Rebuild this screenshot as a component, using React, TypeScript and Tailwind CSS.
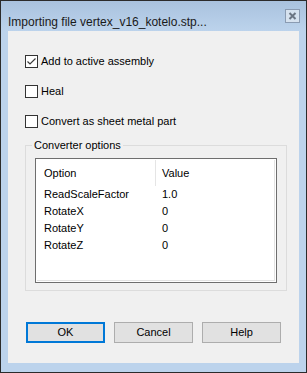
import { useState } from 'react';

const options: { name: string; value: string }[] = [
    { name: 'ReadScaleFactor', value: '1.0' },
    { name: 'RotateX', value: '0' },
    { name: 'RotateY', value: '0' },
    { name: 'RotateZ', value: '0' },
];

function CheckBox({ label, checked, onToggle }: { label: string; checked: boolean; onToggle: () => void }) {
    return (
        <label className="flex h-[13px] items-center gap-[3px]" onClick={onToggle}>
            <span className="flex h-[13px] w-[13px] items-center justify-center border border-[#333333] bg-white">
                {checked && (
                    <svg width="11" height="11" viewBox="0 0 11 11">
                        <path d="M1.5 5.5 L4 8 L9.5 2.5" fill="none" stroke="#3c3c3c" strokeWidth="1.2" />
                    </svg>
                )}
            </span>
            <span className="leading-none">{label}</span>
        </label>
    );
}

export default function App() {
    const [addToAssembly, setAddToAssembly] = useState(true);
    const [heal, setHeal] = useState(false);
    const [sheetMetal, setSheetMetal] = useState(false);

    return (
        <div className="flex h-[373px] w-[307px] flex-col border border-[#2b2b2b] bg-[#bcd3ec] text-[11px] text-black [font-family:'Liberation_Sans',Arial,sans-serif]">
            {/* title bar */}
            <div className="flex h-[30px] items-start justify-between bg-gradient-to-b from-[#a9c2de] to-[#bcd3ec] pl-[7px] pr-[6px]">
                <span className="pt-[15px] text-[12px] leading-none text-[#1a1a1a]">Importing file vertex_v16_kotelo.stp...</span>
                <span className="mt-[8px] flex h-[14px] w-[15px] items-center justify-center border border-[#8a9bb2] bg-[#d6e2ef]">
                    <svg width="9" height="8" viewBox="0 0 9 8">
                        <path d="M1.5 1 L7.5 7 M7.5 1 L1.5 7" stroke="#6c7684" strokeWidth="2" />
                    </svg>
                </span>
            </div>

            <div className="mx-[7px] mb-[9px] flex flex-1 flex-col bg-[#f0f0f0] pl-[17px] pt-[24px]">
                <div className="flex flex-col gap-[17px]">
                    <CheckBox label="Add to active assembly" checked={addToAssembly} onToggle={() => setAddToAssembly(!addToAssembly)} />
                    <CheckBox label="Heal" checked={heal} onToggle={() => setHeal(!heal)} />
                    <CheckBox label="Convert as sheet metal part" checked={sheetMetal} onToggle={() => setSheetMetal(!sheetMetal)} />
                </div>

                <fieldset className="mt-[10px] h-[153px] w-[262px] border border-[#dcdcdc] px-[9px] pb-[7px] pt-[6px]">
                    <legend className="-ml-[3px] px-[2px] leading-[14px]">Converter options</legend>
                    <div className="h-[125px] border border-[#6e6e6e] bg-white p-px">
                        <div className="h-full border-r border-b border-[#e3e3e3]">
                            <div className="flex h-[26px] items-center">
                                <span className="w-[118px] pl-[7px]">Option</span>
                                <span className="h-full w-px bg-[#e5e5e5]" />
                                <span className="pl-[6px]">Value</span>
                            </div>
                            {options.map((opt) => (
                                <div key={opt.name} className="flex h-[17px] items-center">
                                    <span className="w-[119px] pl-[7px]">{opt.name}</span>
                                    <span className="pl-[6px]">{opt.value}</span>
                                </div>
                            ))}
                        </div>
                    </div>
                </fieldset>

                <div className="mt-[31px] flex gap-[9px] pl-px">
                    <button className="h-[21px] w-[79px] border-2 border-[#0078d7] bg-[#e1e1e1]">OK</button>
                    <button className="h-[21px] w-[79px] border border-[#adadad] bg-[#e1e1e1]">Cancel</button>
                    <button className="h-[21px] w-[79px] border border-[#adadad] bg-[#e1e1e1]">Help</button>
                </div>
            </div>
        </div>
    );
}
